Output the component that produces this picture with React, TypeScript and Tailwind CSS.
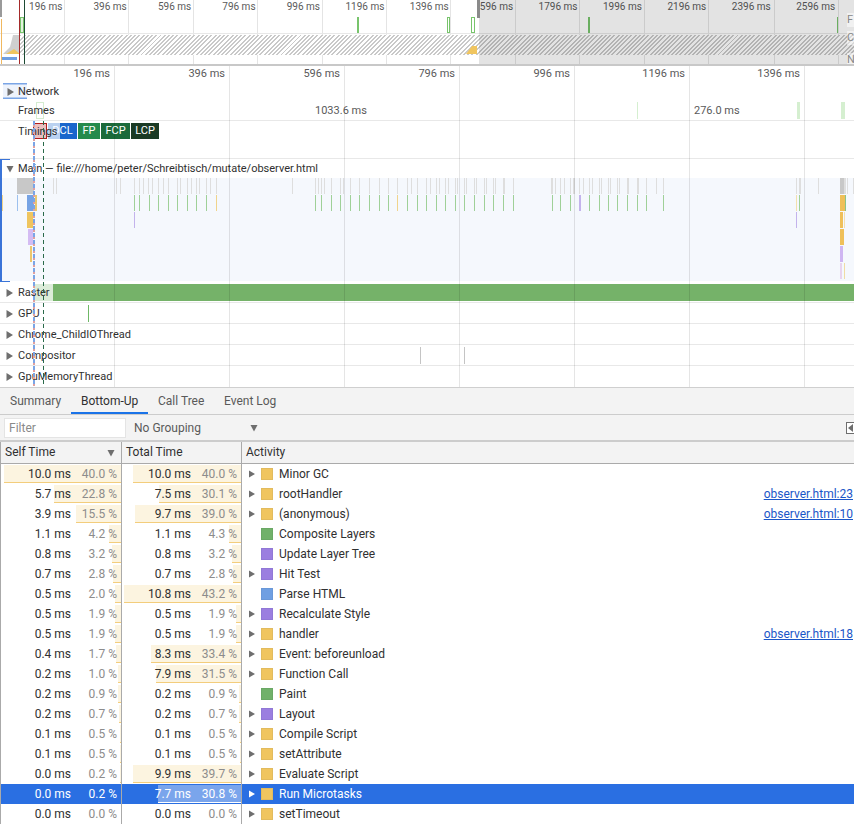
const overviewLabels = ["196 ms", "396 ms", "596 ms", "796 ms", "996 ms", "1196 ms", "1396 ms", "596 ms", "1796 ms", "1996 ms", "2196 ms", "2396 ms", "2596 ms"];
const overviewLines = [64, 128, 193, 257, 322, 386, 450, 515, 579, 644, 708, 774, 838];

const rulerLabels = ["196 ms", "396 ms", "596 ms", "796 ms", "996 ms", "1196 ms", "1396 ms"];
const rulerLines = [114, 229, 344, 459, 574, 689, 804];

const grayMarks = [53, 56, 116, 120, 134, 139, 143, 148, 152, 158, 163, 168, 177, 180, 187, 191, 196, 199, 206, 210, 216, 292, 315, 318, 321, 324, 331, 340, 343, 350, 359, 369, 379, 388, 397, 407, 411, 417, 426, 430, 436, 439, 445, 448, 455, 457, 464, 466, 474, 476, 484, 486, 493, 495, 513, 555, 560, 564, 570, 579, 583, 589, 592, 599, 601, 608, 610, 617, 619, 646, 656, 663, 796, 818, 847, 853];
const wideGray = [503, 551, 573, 627, 637, 799];
const greenMarks = [134, 139, 149, 158, 168, 177, 187, 196, 206, 216, 315, 321, 331, 340, 350, 359, 369, 379, 388, 397, 407, 417, 426, 436, 445, 455, 464, 474, 484, 493, 503, 513, 552, 560, 570, 589, 599, 608, 617, 627, 637, 646, 663, 799];

type Row = {
  name: string;
  self: [string, number];
  total: [string, number];
  color: "y" | "g" | "p" | "b";
  arrow?: boolean;
  link?: string;
  selected?: boolean;
};

const rows: Row[] = [
  { name: "Minor GC", self: ["10.0", 40.0], total: ["10.0", 40.0], color: "y", arrow: true },
  { name: "rootHandler", self: ["5.7", 22.8], total: ["7.5", 30.1], color: "y", arrow: true, link: "observer.html:23" },
  { name: "(anonymous)", self: ["3.9", 15.5], total: ["9.7", 39.0], color: "y", arrow: true, link: "observer.html:10" },
  { name: "Composite Layers", self: ["1.1", 4.2], total: ["1.1", 4.3], color: "g" },
  { name: "Update Layer Tree", self: ["0.8", 3.2], total: ["0.8", 3.2], color: "p" },
  { name: "Hit Test", self: ["0.7", 2.8], total: ["0.7", 2.8], color: "p", arrow: true },
  { name: "Parse HTML", self: ["0.5", 2.0], total: ["10.8", 43.2], color: "b" },
  { name: "Recalculate Style", self: ["0.5", 1.9], total: ["0.5", 1.9], color: "p", arrow: true },
  { name: "handler", self: ["0.5", 1.9], total: ["0.5", 1.9], color: "y", arrow: true, link: "observer.html:18" },
  { name: "Event: beforeunload", self: ["0.4", 1.7], total: ["8.3", 33.4], color: "y", arrow: true },
  { name: "Function Call", self: ["0.2", 1.0], total: ["7.9", 31.5], color: "y", arrow: true },
  { name: "Paint", self: ["0.2", 0.9], total: ["0.2", 0.9], color: "g" },
  { name: "Layout", self: ["0.2", 0.7], total: ["0.2", 0.7], color: "p", arrow: true },
  { name: "Compile Script", self: ["0.1", 0.5], total: ["0.1", 0.5], color: "y", arrow: true },
  { name: "setAttribute", self: ["0.1", 0.5], total: ["0.1", 0.5], color: "y", arrow: true },
  { name: "Evaluate Script", self: ["0.0", 0.2], total: ["9.9", 39.7], color: "y", arrow: true },
  { name: "Run Microtasks", self: ["0.0", 0.2], total: ["7.7", 30.8], color: "y", arrow: true, selected: true },
  { name: "setTimeout", self: ["0.0", 0.0], total: ["0.0", 0.0], color: "y", arrow: true },
];

const swatches = {
  y: "bg-[#f0c55f] border-[#e2bb5e]",
  g: "bg-[#71b16a] border-[#6aa865]",
  p: "bg-[#9b7ee0] border-[#9178d6]",
  b: "bg-[#6f9fe2] border-[#6a98d8]",
};

function Tri({ open, big, className = "" }: { open?: boolean; big?: boolean; className?: string }) {
  const d = open ? "M0.5 1h7L4 7.5z" : big ? "M0.5 0l6.5 4-6.5 4z" : "M1 0.5l6 3.5-6 3.5z";
  return (
    <svg width="8" height="8" viewBox="0 0 8 8" className={`shrink-0 ${className}`}>
      <path d={d} fill="currentColor" />
    </svg>
  );
}

function Overview() {
  return (
    <div className="relative h-[66px] overflow-hidden border-b-2 border-[#c8c8c8] bg-white text-[10px] text-[#5a5a5a]">
      <svg className="absolute inset-0" width="854" height="64">
        {overviewLines.map((x) => (
          <rect key={x} x={x} y="0" width="1" height="64" fill="#e4e4e4" />
        ))}
        <rect x="0" y="33" width="854" height="1" fill="#e8e8e8" />
        <rect x="1" y="19" width="1" height="45" fill="#f0b860" />
        <rect x="0" y="0" width="2" height="17" fill="#9a9a9a" />
      </svg>

      <div className="relative flex h-[17px] leading-[14px]">
        {overviewLabels.map((label, i) => (
          <span key={i} className="w-[64.4px] shrink-0 whitespace-nowrap pr-[2px] text-right">
            {label}
          </span>
        ))}
      </div>
      <div className="h-[18px]" />
      <div className="relative ml-[20px] h-[20px] bg-[repeating-linear-gradient(135deg,#c9c9c9_0,#c9c9c9_1.4px,#ffffff_1.4px,#ffffff_3px)]" />

      {/* frame ticks, cpu and net bits drawn over the hatch */}
      <svg className="absolute inset-0" width="854" height="64">
        <path d="M3 54L10 47L13 35H20V54Z" fill="#cfcfcf" />
        <path d="M6 54L14 49L20 54Z" fill="#f0c55f" />
        <path d="M466 54L472 46H477V54Z" fill="#f0c55f" />
        <rect x="2" y="57" width="15" height="3" fill="#6f9fe2" />
        <rect x="20.5" y="17.5" width="3" height="15" fill="#e3f3df" stroke="#78c46c" />
        <rect x="357" y="17" width="2" height="16" fill="#78c46c" />
        <rect x="447.5" y="17.5" width="2" height="15" fill="#fff" stroke="#78c46c" />
        <rect x="471.5" y="17.5" width="3" height="15" fill="#fff" stroke="#78c46c" />
        <rect x="588" y="17" width="2" height="16" fill="#78c46c" />
        <rect x="837" y="17" width="1" height="16" fill="#78c46c" />
        <rect x="19" y="0" width="1" height="64" fill="#a52a2a" />
        <rect x="24" y="0" width="1" height="64" fill="#1c4a33" />
        <rect x="479" y="0" width="375" height="64" fill="#000" fillOpacity="0.11" />
        <rect x="477" y="0" width="3" height="18" fill="#8a8a8a" />
      </svg>

      <div className="absolute inset-y-0 right-0 flex w-[7px] flex-col text-[11px] leading-[14px] text-[#888]">
        <span className="mt-[13px] bg-white/50">F</span>
        <span className="mt-[4px] bg-white/50">C</span>
        <span className="mt-[8px] bg-white/50">N</span>
      </div>
    </div>
  );
}

function TrackRow({ label, last }: { label: string; last?: boolean }) {
  return (
    <div className={`relative flex h-[21px] items-center gap-[4px] pl-[6px] ${last ? "pt-px" : "border-b border-[#e8e8e8] pt-[2px]"}`}>
      <Tri big className="text-[#6e6e6e]" />
      <span className="text-[11px] text-[#303030]">{label}</span>
    </div>
  );
}

function Timeline() {
  return (
    <div className="relative h-[322px] overflow-hidden border-b border-[#cfcfcf] bg-white text-[11px] text-[#303030]">
      {/* flame chart, raster bar and thread ticks sit under the track labels */}
      <svg className="absolute inset-0" width="854" height="321">
        <g transform="translate(0 112)">
          <rect x="2" y="0" width="852" height="103" fill="#f5f8fd" />
          <rect x="17" y="0" width="17" height="16" fill="#c8c8c8" />
          {grayMarks.map((x) => (
            <rect key={x} x={x} y="0" width="1" height="16" fill="#dedede" />
          ))}
          {wideGray.map((x) => (
            <rect key={x} x={x} y="0" width="2" height="16" fill="#dedede" />
          ))}
          <rect x="840" y="0" width="4" height="16" fill="#c8c8c8" />
          <rect x="844" y="0" width="2" height="16" fill="#dedede" />
          {greenMarks.map((x) => (
            <rect key={x} x={x} y="17" width="1" height="16" fill="#9fd098" />
          ))}
          <rect x="2" y="17" width="1" height="16" fill="#f0d48c" />
          <rect x="17" y="17" width="1" height="16" fill="#9cc0ee" />
          <rect x="27" y="17" width="7" height="16" fill="#76a3e4" />
          <rect x="35" y="17" width="2" height="16" fill="#e8c870" />
          <rect x="216" y="17" width="1" height="16" fill="#f0d48c" />
          <rect x="397" y="17" width="1" height="16" fill="#f0d48c" />
          <rect x="579" y="17" width="2" height="16" fill="#c3b3ec" />
          <rect x="796" y="17" width="1" height="16" fill="#f3e0ae" />
          <rect x="840" y="17" width="5" height="16" fill="#efc05a" />
          <rect x="845" y="17" width="1" height="16" fill="#8cc488" />
          <rect x="27" y="34" width="6" height="16" fill="#efc55f" />
          <rect x="134" y="34" width="1" height="16" fill="#c3b3ec" />
          <rect x="796" y="34" width="1" height="16" fill="#c3b3ec" />
          <rect x="840" y="34" width="3" height="16" fill="#efc05a" />
          <rect x="844" y="34" width="1" height="16" fill="#f3e0ae" />
          <rect x="28" y="51" width="5" height="16" fill="#d4bcf3" />
          <rect x="840" y="51" width="4" height="16" fill="#efc05a" />
          <rect x="840" y="68" width="3" height="16" fill="#cfb6f2" />
          <rect x="30" y="68" width="2" height="16" fill="#ecc76e" />
          <rect x="840" y="85" width="2" height="16" fill="#e8d4ee" />
          <rect x="844" y="85" width="1" height="16" fill="#f0dca4" />
        </g>
        <rect x="34" y="218" width="820" height="17" fill="#75b269" />
        <rect x="34" y="218" width="19" height="17" fill="#fff" fillOpacity="0.75" />
        <rect x="3" y="17" width="24" height="16" fill="#eef3fc" />
        <rect x="3" y="17" width="24" height="1.5" fill="#7aa5e6" />
        <rect x="3" y="31.5" width="24" height="1.5" fill="#7aa5e6" />
        <rect x="36.5" y="36.5" width="7" height="16" fill="#fff" stroke="#d4ecd0" />
        <rect x="637" y="36" width="1" height="17" fill="#d5efd0" />
        <rect x="797" y="36" width="3" height="17" fill="#d5efd0" />
        <rect x="841" y="36" width="4" height="17" fill="#d5efd0" />
        <rect x="88" y="239" width="1" height="17" fill="#6fb866" />
        <rect x="420" y="281" width="1" height="17" fill="#c4c4c4" />
        <rect x="464" y="281" width="1" height="17" fill="#c4c4c4" />
      </svg>

      <div className="relative -ml-px flex h-[15px] leading-[15px] text-[#5a5a5a]">
        {rulerLabels.map((label) => (
          <span key={label} className="w-[115px] shrink-0 whitespace-nowrap pr-[4px] text-right">
            {label}
          </span>
        ))}
      </div>

      <div className="relative flex h-[20px] items-center gap-[3px] pl-[7px] pt-[2px]">
        <Tri big className="text-[#6e6e6e]" />
        <span>Network</span>
      </div>

      <div className="relative flex h-[20px] items-center border-b border-[#e8e8e8] pl-[18px] pt-px">
        <span className="w-[297px]">Frames</span>
        <span className="w-[379px] text-[#5a5a5a]">1033.6 ms</span>
        <span className="text-[#5a5a5a]">276.0 ms</span>
      </div>

      <div className="relative h-[38px] border-b border-[#e8e8e8]">
        <div className="flex gap-px pl-[48px] pt-[2px] text-white">
          <div className="flex h-[16px] w-[29px] items-center justify-center bg-[#1a66cc]">DCL</div>
          <div className="flex h-[16px] w-[22px] items-center justify-center bg-[#258a4c]">FP</div>
          <div className="flex h-[16px] w-[29px] items-center justify-center bg-[#1b6a3a]">FCP</div>
          <div className="flex h-[16px] w-[28px] items-center justify-center bg-[#1a3a24]">LCP</div>
        </div>
        <svg className="absolute inset-0" width="70" height="20">
          <rect x="15" y="2" width="45" height="16" fill="#fff" fillOpacity="0.7" />
          <rect x="33.5" y="2.5" width="13" height="15" fill="#d88a8a" fillOpacity="0.55" stroke="#b01c1c" />
        </svg>
        <span className="absolute left-[18px] top-[2px] leading-[17px]">Timings</span>
      </div>

      <div className="relative flex h-[19px] items-center gap-[4px] pl-[6px] pt-px">
        <Tri open className="text-[#6e6e6e]" />
        <span>Main — file:///home/peter/Schreibtisch/mutate/observer.html</span>
      </div>

      <div className="h-[104px]" />

      <TrackRow label="Raster" />
      <TrackRow label="GPU" />
      <TrackRow label="Chrome_ChildIOThread" />
      <TrackRow label="Compositor" />
      <TrackRow label="GpuMemoryThread" last />

      {/* grid lines and load markers run over every track */}
      <svg className="absolute inset-0" width="854" height="321">
        {rulerLines.map((x) => (
          <rect key={x} x={x} y="0" width="1" height="321" fill="#000" fillOpacity="0.1" />
        ))}
        <rect x="0" y="93" width="2" height="123" fill="#3a74d8" />
        <rect x="0" y="93" width="10" height="1" fill="#3a74d8" />
        <rect x="0" y="215" width="10" height="1" fill="#3a74d8" />
        <line x1="34" y1="55" x2="34" y2="321" stroke="#7aa5e6" strokeWidth="2" strokeDasharray="4 3" />
        <line x1="34" y1="59" x2="34" y2="321" stroke="#e0a0a0" strokeWidth="2" strokeDasharray="2 5" />
        <line x1="43.5" y1="55" x2="43.5" y2="321" stroke="#2a6a4a" strokeDasharray="4 3" />
      </svg>
    </div>
  );
}

function Cell({ value, pct, max, selected }: { value: string; pct: number; max: number; selected?: boolean }) {
  return (
    <div className={`relative flex h-full w-full items-center justify-end pr-[4px] ${selected ? "text-white" : ""}`}>
      <div
        className={`absolute right-0 top-[1px] h-[18px] border-b ${
          selected && max > 40 ? "border-white bg-[#7aa5ec]" : selected ? "border-transparent" : "border-[#f3cd7c] bg-[#fcf4e0]"
        }`}
        style={{ width: (pct / max) * 117 }}
      />
      <span className="relative">{value} ms</span>
      <span className={`relative w-[46px] text-right ${selected ? "text-white" : "text-[#8c8c8c]"}`}>{pct.toFixed(1)} %</span>
    </div>
  );
}

function Tabs() {
  return (
    <div className="flex h-[27px] items-stretch border-b border-[#ccc] bg-[#f3f3f3] text-[12px] text-[#5a5a5a]">
      <div className="flex w-[71px] items-center pl-[10px]">Summary</div>
      <div className="flex w-[77px] items-center border-b-2 border-[#1a73e8] pl-[10px] pt-[2px] text-[#303030]">Bottom-Up</div>
      <div className="flex w-[66px] items-center pl-[10px]">Call Tree</div>
      <div className="flex items-center pl-[10px]">Event Log</div>
    </div>
  );
}

function Toolbar() {
  return (
    <div className="flex h-[27px] items-center overflow-hidden border-b-2 border-[#ccc] bg-[#f3f3f3] pt-px text-[12px] text-[#5a5a5a]">
      <input
        placeholder="Filter"
        className="ml-[4px] h-[20px] w-[122px] shrink-0 border border-[#e4e4e4] bg-white pl-[4px] outline-none placeholder:text-[#8a8a8a]"
        readOnly
      />
      <span className="ml-[8px] w-[116px] shrink-0">No Grouping</span>
      <Tri open className="text-[#6e6e6e]" />
      <div className="ml-[588px] flex h-[12px] w-[12px] shrink-0 items-center border border-[#6e6e6e] bg-white pl-[1px]">
        <svg width="6" height="8" viewBox="0 0 6 8">
          <path d="M5 0v8L0 4z" fill="#6e6e6e" />
        </svg>
      </div>
    </div>
  );
}

export default function App() {
  return (
    <div className="h-[824px] w-[854px] overflow-hidden bg-white font-['Roboto',sans-serif]">
      <Overview />
      <Timeline />
      <Tabs />
      <Toolbar />

      <div className="grid h-[22px] grid-cols-[122px_120px_1fr] border-b border-[#aaa] bg-[#f3f3f3] text-[12px] leading-[21px] text-[#303030]">
        <div className="flex items-center border-l border-r border-[#aaa] pl-[4px]">
          Self Time
          <Tri open className="ml-[52px] text-[#6e6e6e]" />
        </div>
        <div className="border-r border-[#aaa] pl-[4px]">Total Time</div>
        <div className="pl-[4px]">Activity</div>
      </div>

      <div className="text-[12px] text-[#303030]">
        {rows.map((r) => (
          <div key={r.name} className={`grid h-[20px] grid-cols-[122px_120px_1fr] items-center ${r.selected ? "bg-[#2a6fe2]" : ""}`}>
            <div className="h-full border-l border-r border-[#aaa]">
              <Cell value={r.self[0]} pct={r.self[1]} max={40} selected={r.selected} />
            </div>
            <div className="h-full border-r border-[#aaa]">
              <Cell value={r.total[0]} pct={r.total[1]} max={43.2} selected={r.selected} />
            </div>
            <div className={`flex h-full items-center ${r.selected ? "text-white" : ""}`}>
              <div className="flex w-[19px] justify-end pr-[5px]">
                {r.arrow && <Tri className={r.selected ? "text-white" : "text-[#6e6e6e]"} />}
              </div>
              <div className={`h-[12px] w-[12px] border ${swatches[r.color]}`} />
              <span className="ml-[6px]">{r.name}</span>
              {r.link && <span className="ml-auto pr-px text-[#1a56c8] underline">{r.link}</span>}
            </div>
          </div>
        ))}
      </div>
    </div>
  );
}
